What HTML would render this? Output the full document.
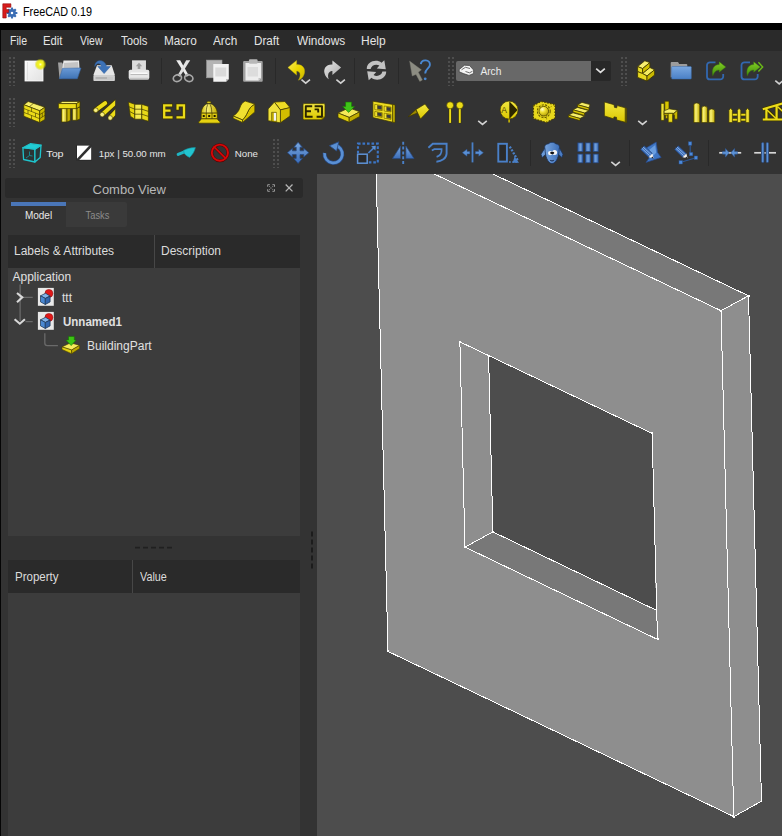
<!DOCTYPE html>
<html lang="en">
<head>
<meta charset="utf-8">
<title>FreeCAD 0.19</title>
<style>
*{box-sizing:border-box;margin:0;padding:0}
html,body{width:782px;height:836px;overflow:hidden;background:#333333}
body{position:relative;font-family:"Liberation Sans",sans-serif;font-size:12px;color:#e0e0e0}
.abs{position:absolute}
#title{left:0;top:0;width:782px;height:23px;background:#fff}
#title .t{position:absolute;left:23px;top:5px;transform:scaleX(.9);transform-origin:0 0;font-size:12px;color:#000;line-height:14px;white-space:nowrap}
#band{left:0;top:23px;width:782px;height:7px;background:#000}
#menubar{left:0;top:30px;width:782px;height:21px;background:#2a2a2a}
#menubar span{position:absolute;top:4px;transform-origin:0 0;line-height:14px;font-size:12px;color:#e4e4e4;white-space:nowrap}
#leftedge{left:0;top:30px;width:1px;height:806px;background:#050505}
.handle{position:absolute;width:6px;height:29px;
 background:linear-gradient(to bottom,#4e4e4e 2px,transparent 2px) 0 0/2px 4px repeat-y,
            linear-gradient(to bottom,#4e4e4e 2px,transparent 2px) 4px 0/2px 4px repeat-y}
.sep{position:absolute;width:1px;height:26px;background:#292929}
.ic{position:absolute;overflow:visible}
.tt{position:absolute;font-size:10.5px;line-height:12px;color:#e0e0e0;white-space:nowrap}
/* combo */
#combotitle{left:5px;top:178px;width:298px;height:20px;background:#2a2a2a;border-radius:3px}
#combotitle .t{position:absolute;left:87.5px;top:4px;font-size:13px;line-height:16px;color:#b8b8b8;white-space:nowrap}
#tabModel{left:11px;top:202px;width:55px;height:25px;background:#333333;border-top:4px solid #4a76b8}
#tabModel span,#tabTasks span{position:absolute;left:0;width:100%;text-align:center;font-size:10px;line-height:12px}
#tabModel span{top:4px;color:#e8e8e8}
#tabTasks{left:66px;top:202px;width:61px;height:25px;background:#3a3a3a;border-radius:0 2px 2px 0}
#tabTasks span{top:8px;left:1px;transform:scaleX(.93);color:#8c8c8c}
.hdr{position:absolute;background:#2a2a2a;height:33px}
.hdr span{position:absolute;top:9px;transform-origin:0 0;line-height:14px;font-size:12px;color:#dcdcdc;white-space:nowrap}
.hdr i{position:absolute;top:0;width:1px;height:33px;background:#474747}
.pane{position:absolute;background:#3c3c3c}
.tree span{position:absolute;line-height:14px;font-size:12px;color:#e0e0e0;white-space:nowrap}
#view{left:317px;top:174px;width:465px;height:662px;background:#4d4d4d}
</style>
</head>
<body>
<div id="title" class="abs"><svg id="logo" class="abs" style="left:0;top:0" width="22" height="23" viewBox="0 0 22 23">
<g fill="#3c6eb4"><circle cx="12" cy="13" r="3.9"/>
<g id="tth"><rect x="10.9" y="7.6" width="2.2" height="10.8" rx=".4"/></g>
<use href="#tth" transform="rotate(45 12 13)"/><use href="#tth" transform="rotate(90 12 13)"/><use href="#tth" transform="rotate(135 12 13)"/></g>
<rect x="10.9" y="11.9" width="2.2" height="2.2" fill="#ffffff"/>
<path d="M2.8,3.8 H10.9 V7.2 H6.2 V9.6 H8.6 V12.6 H6.2 V18 H2.8Z" fill="#d81c1c" stroke="#8e0a0a" stroke-width=".6"/>
</svg><span class="t">FreeCAD 0.19</span></div>
<div id="band" class="abs"></div>
<div id="menubar" class="abs">
<span style="left:9.5px;transform:scaleX(.88)">File</span><span style="left:43px;transform:scaleX(.94)">Edit</span><span style="left:80px;transform:scaleX(.87)">View</span><span style="left:121px;transform:scaleX(.94)">Tools</span><span style="left:163.5px;transform:scaleX(.98)">Macro</span><span style="left:213px;transform:scaleX(.98)">Arch</span><span style="left:254px;transform:scaleX(.97)">Draft</span><span style="left:296.5px;transform:scaleX(.99)">Windows</span><span style="left:361px">Help</span>
</div>
<div id="leftedge" class="abs"></div>

<!-- toolbar handles -->
<div class="handle" style="left:9px;top:57px"></div>
<div class="handle" style="left:448px;top:57px"></div>
<div class="handle" style="left:621px;top:57px"></div>
<div class="handle" style="left:9px;top:98px"></div>
<div class="handle" style="left:9px;top:139px"></div>
<div class="handle" style="left:273px;top:139px"></div>
<!-- separators -->
<div class="sep" style="left:161px;top:58px"></div>
<div class="sep" style="left:275px;top:58px"></div>
<div class="sep" style="left:354px;top:58px"></div>
<div class="sep" style="left:398px;top:58px"></div>
<div class="sep" style="left:530px;top:140px"></div>
<div class="sep" style="left:629px;top:140px"></div>
<div class="sep" style="left:708px;top:140px"></div>

<svg class="abs" style="left:0;top:51px" width="782" height="123" viewBox="0 51 782 123">
<defs>
<linearGradient id="gPage" x1="0" y1="0" x2="1" y2="1"><stop offset="0" stop-color="#fafafa"/><stop offset="1" stop-color="#e2e2e2"/></linearGradient>
<radialGradient id="gGlow"><stop offset="0" stop-color="#ffffd0"/><stop offset=".3" stop-color="#f6f620"/><stop offset=".65" stop-color="#e8e800" stop-opacity=".8"/><stop offset="1" stop-color="#d0d000" stop-opacity="0"/></radialGradient>
<linearGradient id="gBlue" x1="0" y1="0" x2="0" y2="1"><stop offset="0" stop-color="#6a9ad6"/><stop offset="1" stop-color="#3f73b5"/></linearGradient>
<linearGradient id="gGrey" x1="0" y1="0" x2="0" y2="1"><stop offset="0" stop-color="#f0f0f0"/><stop offset="1" stop-color="#c4c4c4"/></linearGradient>
<linearGradient id="gYel" x1="0" y1="0" x2="1" y2="1"><stop offset="0" stop-color="#f6ea60"/><stop offset=".5" stop-color="#ecd800"/><stop offset="1" stop-color="#c8b400"/></linearGradient>
<linearGradient id="gRedo" x1="0" y1="0" x2="1" y2="1"><stop offset="0" stop-color="#e6e6e6"/><stop offset="1" stop-color="#a8a8a8"/></linearGradient>
</defs>
<!-- new -->
<rect x="25" y="61" width="18" height="20" fill="url(#gPage)" stroke="#ffffff" stroke-width=".8"/>
<line x1="27.5" y1="62" x2="27.5" y2="80" stroke="#d4d4d4" stroke-width=".6"/>
<circle cx="40.4" cy="64.4" r="6" fill="url(#gGlow)"/>
<!-- open -->
<polygon points="58,62.5 62,62.5 63,64 63,78 59.5,78.5" fill="#a0a0a0"/>
<polygon points="63.5,60.5 79,60.5 79.5,68.5 62.5,69.5 61,77" fill="#e8e8e8"/>
<polygon points="64,63 78,62 78.5,68 63.5,68.5" fill="#c4c4c4"/>
<polygon points="62.5,68.4 81,68 77.3,78.7 59.4,78.7" fill="url(#gBlue)" stroke="#3567a8" stroke-width=".6"/>
<!-- save -->
<polygon points="97,65.3 111.7,65.3 114.9,75.1 93.4,75.1" fill="#e6e6e6"/>
<rect x="93.4" y="75.1" width="21.5" height="6" rx=".8" fill="#cfcfcf"/>
<rect x="95.5" y="77" width="17.5" height="2.2" fill="#b2b2b2"/>
<rect x="107" y="77" width="6" height="2.2" fill="#c8c8c8"/>
<path d="M94.8,66.5 C94.5,59 105,58.5 106.5,66.5 L110.4,66.5 L104.1,73.6 L97.8,66.5 L101.5,66.5 C100.5,62.5 96.5,62.5 94.8,66.5Z" fill="#3c72b8" stroke="#2d5c9c" stroke-width=".5"/>
<!-- print -->
<rect x="132.3" y="60.8" width="13.4" height="10" fill="#dcdcdc" stroke="#f2f2f2" stroke-width=".6"/>
<polygon points="139,62.8 142.2,66.2 140.3,66.2 140.3,69 137.7,69 137.7,66.2 135.8,66.2" fill="#9c9c9c"/>
<rect x="128.7" y="69.8" width="20.6" height="9.8" rx="1.8" fill="#e6e6e6"/>
<rect x="130.5" y="72.6" width="17" height="1.6" rx=".8" fill="#fafafa"/>
<rect x="130.5" y="74.2" width="17" height=".8" fill="#b0b0b0"/>
<rect x="129.2" y="77.8" width="19.6" height="1.8" rx=".9" fill="#c6c6c6"/>
<!-- cut -->
<polygon points="176.2,60.2 180.2,60.2 188.8,75.6 186.6,76.8" fill="#ececec"/>
<polygon points="190.2,60.2 186.2,60.2 177.6,75.6 179.8,76.8" fill="#e2e2e2"/>
<ellipse cx="177.4" cy="78.1" rx="4.2" ry="3.3" transform="rotate(-20 177.4 78.1)" fill="none" stroke="#a8a8a8" stroke-width="1.7"/>
<ellipse cx="188.8" cy="78.1" rx="4.2" ry="3.3" transform="rotate(20 188.8 78.1)" fill="none" stroke="#a8a8a8" stroke-width="1.7"/>
<!-- copy -->
<rect x="206.6" y="60.1" width="15.4" height="17.7" fill="#b4b4b4" stroke="#9a9a9a" stroke-width=".6"/>
<path d="M213.3,64.1 H228.8 V79 L226,81.8 H213.3Z" fill="#f2f2f2"/>
<rect x="215.3" y="67.5" width="11" height="9" fill="#dadada"/>
<polygon points="226,81.8 226,79 228.8,79" fill="#bcbcbc"/>
<!-- paste -->
<rect x="243.1" y="61" width="19.6" height="20.8" rx="1" fill="#a2a2a2"/>
<path d="M245.5,63 H261 V78 L258.5,80.5 H245.5Z" fill="#ededed"/>
<rect x="247.5" y="67" width="10.5" height="9.5" fill="#dcdcdc"/>
<polygon points="258.5,80.5 258.5,78 261,78" fill="#c2c2c2"/>
<rect x="248.9" y="59.2" width="8.7" height="4.5" rx="1.2" fill="#b8b8b8"/>
<!-- undo -->
<path d="M287.9,67.5 L296.6,60.4 L296.6,64.6 C303,64.2 305.8,69 304.2,74 C303.2,77.2 301,79.4 298.4,80.2 C300.4,77.4 300.8,73.6 299,72 C298.2,71.2 297.4,71 296.6,71 L296.6,75.1Z" fill="url(#gYel)" stroke="#c4b000" stroke-width=".4"/>
<polyline points="301.5,79.6 305.7,83.2 310,79.6" fill="none" stroke="#d2d2d2" stroke-width="1.6"/>
<!-- redo -->
<path d="M341.1,67.5 L332.4,60.4 L332.4,64.6 C326,64.2 323.2,69 324.6,73.6 C325.4,76.4 327,78.4 328.8,79.3 C327.6,76.6 327.8,73.4 329.6,72 C330.5,71.2 331.5,71 332.4,71 L332.4,75.1Z" fill="url(#gRedo)"/>
<polyline points="336.4,79.6 340.7,83.2 344.9,79.6" fill="none" stroke="#d2d2d2" stroke-width="1.6"/>
<!-- refresh -->
<g fill="#c2c2c2">
<path d="M366.8,69 C366.6,61.5 376.5,58.5 381.5,62.8 L384.3,60.3 L385.8,69.3 L376.8,68.6 L379.4,65.6 C376.5,63.6 371.5,64.8 370.6,69Z"/>
<path d="M386.2,71.6 C386.4,79.1 376.5,82.1 371.5,77.8 L368.7,80.3 L367.2,71.3 L376.2,72 L373.6,75 C376.5,77 381.5,75.8 382.4,71.6Z"/>
</g>
<!-- whats this -->
<polygon points="409.6,61.1 421.4,69.8 418.3,72.2 422.4,80 419.8,81.4 416,74.4 412.2,76" fill="#8c8c82" stroke="#7a7a70" stroke-width=".4"/>
<path d="M420.8,64.2 C421.6,58.6 430.4,59.4 429.9,65 C429.6,68.4 425.2,68.6 425.2,73.6" fill="none" stroke="#4a88d2" stroke-width="1.9"/>
<circle cx="425.2" cy="78.8" r="1.4" fill="#4a88d2"/>
<!-- workbench combo -->
<path d="M458,61 H591 V81 H458 A2,2 0 0 1 456,79 V63 A2,2 0 0 1 458,61Z" fill="#686868"/>
<path d="M591,61 H609 A2,2 0 0 1 611,63 V79 A2,2 0 0 1 609,81 H591Z" fill="#282828"/>
<polyline points="596.2,68.6 600.5,72.4 604.8,68.6" fill="none" stroke="#e0e0e0" stroke-width="1.7"/>
<text x="480.4" y="74.8" font-family="Liberation Sans, sans-serif" font-size="10" fill="#ececec" textLength="21" lengthAdjust="spacingAndGlyphs">Arch</text>
<!-- wb icon -->
<path d="M459.2,69.5 L464.5,65.2 L469.5,65.5 L473.6,70 L473.6,73.5 L469,75.4 L463.5,73.6 L459.2,71.8Z" fill="#f4f4f4" stroke="#3a3a3a" stroke-width=".7"/>
<path d="M461.5,69.8 L465.5,67.3 L470,68.5 M465.5,71.5 L469.5,72.8 L472.5,71.2" fill="none" stroke="#4a4a4a" stroke-width=".8"/>
<!-- part -->
<defs>
<linearGradient id="gY2" x1="0" y1="0" x2="1" y2="1"><stop offset="0" stop-color="#f6ee58"/><stop offset="1" stop-color="#d2c000"/></linearGradient>
<linearGradient id="gBlue2" x1="0" y1="0" x2="0" y2="1"><stop offset="0" stop-color="#7aa8e0"/><stop offset="1" stop-color="#4a80c6"/></linearGradient>
<linearGradient id="gGreen" x1="0" y1="0" x2="0" y2="1"><stop offset="0" stop-color="#84d024"/><stop offset="1" stop-color="#3f8c0c"/></linearGradient>
</defs>
<g stroke="#3c3400" stroke-width=".8" stroke-linejoin="round">
<polygon points="637.6,66.6 644.8,60.8 649.9,62.6 642.6,68.6" fill="#f8f070"/>
<polygon points="637.6,66.6 642.6,68.6 642.6,73.6 637.6,71.6" fill="#e8dc28"/>
<polygon points="642.6,68.6 649.9,62.6 649.9,67.5 642.6,73.6" fill="#cfc000"/>
<polygon points="642.6,73.6 649.9,67.5 654.6,69.8 647,76" fill="#f4ec60"/>
<polygon points="637.6,71.6 642.6,73.6 647,76 647,81 637.6,77.4" fill="#e6d820"/>
<polygon points="647,76 654.6,69.8 654.6,75.1 647,81" fill="#c8b800"/>
</g>
<!-- folder -->
<path d="M670.7,77.5 V63 A1,1 0 0 1 671.7,62 H678 L679.2,64 H686.3 A1,1 0 0 1 687.3,65 V70Z" fill="#9c9c9c"/>
<rect x="671.6" y="66.5" width="19.7" height="12.5" rx=".8" fill="url(#gBlue2)" stroke="#3a6cae" stroke-width=".5"/>
<!-- link 1 -->
<g id="lnk">
<path d="M715.5,62.3 H710 A3,3 0 0 0 707,65.3 V76.4 A3,3 0 0 0 710,79.4 H720.2 A3,3 0 0 0 723.2,76.4 V74" fill="none" stroke="#3268b0" stroke-width="1.8"/>
<path d="M725.8,67 L719.2,61.8 L719.2,64.6 C713.6,64.6 711.4,69.6 712.8,75.8 C714.4,71.8 716.2,70.2 719.2,70 L719.2,72.2Z" fill="url(#gGreen)" stroke="#3a7a08" stroke-width=".4"/>
</g>
<use href="#lnk" x="34.5"/>
<polyline points="758.4,62.3 762.7,67 758.4,71.6" fill="none" stroke="#6cbc18" stroke-width="1.4"/>
<polyline points="775.3,80.7 779.2,83.9 783,80.7" fill="none" stroke="#d2d2d2" stroke-width="1.6"/>

<defs>
<linearGradient id="yF" x1="0" y1="0" x2="0" y2="1"><stop offset="0" stop-color="#f2e640"/><stop offset="1" stop-color="#dcc800"/></linearGradient>
<linearGradient id="yH" x1="0" y1="0" x2="1" y2="0"><stop offset="0" stop-color="#c8b400"/><stop offset=".35" stop-color="#faf27a"/><stop offset="1" stop-color="#c0aa00"/></linearGradient>
<radialGradient id="ySph" cx=".35" cy=".3" r=".8"><stop offset="0" stop-color="#fffbd0"/><stop offset=".4" stop-color="#f0e030"/><stop offset="1" stop-color="#a89400"/></radialGradient>
</defs>
<g stroke="#3e3600" stroke-width=".7" stroke-linejoin="round">
<!-- wall -->
<polygon points="23.8,104.7 28.2,101.5 44.9,107.2 39.7,110.8" fill="#f6ee68"/>
<polygon points="23.8,104.7 39.7,110.8 39.7,122.6 23.8,116.2" fill="#ecdc18"/>
<polygon points="39.7,110.8 44.9,107.2 44.9,119.4 39.7,122.6" fill="#cdbc00"/>
<path d="M23.8,108.5 L39.7,114.7 L44.9,111.2 M23.8,112.4 L39.7,118.7 L44.9,115.3 M31.5,107.7 V111.5 M28,110.2 V114 M35.5,113.1 V117 M31.5,115.5 V119.3 M33.5,103.3 L29.5,106.6 M42.3,113 V117" fill="none" stroke-width=".6"/>
<!-- structure -->
<polygon points="61.5,108 67,108 67,122 61.5,122" fill="url(#yH)"/>
<polygon points="67,108 70.4,107 70.4,120.5 67,122" fill="#c4b000"/>
<polygon points="72.3,108 77,108 77,120.3 72.3,120.3" fill="url(#yH)"/>
<polygon points="77,108 80,107 80,119 77,120.3" fill="#c4b000"/>
<polygon points="58.4,103.6 62.6,101.5 80,101.5 76.4,103.6" fill="#f8f070"/>
<polygon points="58.4,103.6 76.4,103.6 76.4,108.6 58.4,108.6" fill="#ecdc18"/>
<polygon points="76.4,103.6 80,101.5 80,106.6 76.4,108.6" fill="#c8b600"/>
</g>
<!-- rebar -->
<clipPath id="cpRebar"><rect x="90" y="98" width="25.2" height="28"/></clipPath>
<g clip-path="url(#cpRebar)">
<line x1="95.6" y1="110.2" x2="105.2" y2="103.2" stroke="#3e3600" stroke-width="5.4" stroke-linecap="round"/>
<line x1="102" y1="114.7" x2="118" y2="100.3" stroke="#3e3600" stroke-width="5.4"/>
<line x1="110" y1="117.9" x2="118" y2="109.4" stroke="#3e3600" stroke-width="5.4"/>
<line x1="95.6" y1="110.2" x2="105.2" y2="103.2" stroke="#ecdc18" stroke-width="4" stroke-linecap="round"/>
<line x1="102" y1="114.7" x2="118" y2="100.3" stroke="#ecdc18" stroke-width="4"/>
<line x1="110" y1="117.9" x2="118" y2="109.4" stroke="#ecdc18" stroke-width="4"/>
</g>
<circle cx="95.8" cy="110.2" r="2.3" fill="#f8f080" stroke="#3e3600" stroke-width=".6"/>
<circle cx="102.2" cy="114.6" r="2.3" fill="#f8f080" stroke="#3e3600" stroke-width=".6"/>
<circle cx="110.2" cy="117.9" r="2.3" fill="#f8f080" stroke="#3e3600" stroke-width=".6"/>
<g stroke="#3e3600" stroke-width=".7" stroke-linejoin="round">
<!-- curtain wall -->
<polygon points="128.4,102 134.8,104.3 134.8,119.2 130.3,116.2" fill="#e4d410"/>
<polygon points="134.8,104.3 141.8,104.3 141.8,119.2 134.8,119.2" fill="#f4ea50"/>
<polygon points="141.8,104.3 148.4,106.4 148.4,121.3 141.8,119.2" fill="#e8d818"/>
<path d="M129,106.8 L134.8,109.2 H141.8 L148.4,111.4 M129.7,111.5 L134.8,114.2 H141.8 L148.4,116.4" fill="none"/>
<!-- dome -->
<path d="M201.2,118.7 H217.3 C218,120.4 219.4,121.4 220.3,122 Q220.3,123.2 219,123.2 H199.8 Q198.4,123.2 198.4,122 C199.4,121.4 200.6,120.4 201.2,118.7Z" fill="#e6d210"/>
<rect x="201.2" y="112.9" width="16.1" height="5.8" fill="#e2ce10"/>
<path d="M201.2,112.9 C201.6,107.5 204.6,104 208.9,103.2 C213.4,104 216.8,107.5 217.3,112.9Z" fill="url(#yH)"/>
<path d="M206.3,112.9 C206.2,108.5 207,105.4 208.3,103.6 M211.8,112.9 C211.8,108.5 210.9,105.4 209.6,103.6 M206.3,112.9 V118.7 M212,112.9 V118.7" fill="none" stroke-width=".7"/>
<ellipse cx="208.9" cy="102.3" rx="2.2" ry="1.05" fill="#f0de28"/>
</g>
<g fill="#241e00"><rect x="202.7" y="114.9" width="2.1" height="2.1" rx=".6"/><rect x="208.1" y="114.9" width="2.1" height="2.1" rx=".6"/><rect x="213.6" y="114.9" width="2.1" height="2.1" rx=".6"/></g>
<!-- floor plan -->
<g fill="none" stroke="#3e3600" stroke-width="3.6" stroke-linejoin="miter" stroke-linecap="square">
<path d="M171,105.4 H164.2 V117.4 H171.4 M164.2,110.6 H169.4"/>
<path d="M177.6,108.6 V105.4 H184 V117.4 H177.6"/>
</g>
<g fill="none" stroke="#ecdc18" stroke-width="2.3" stroke-linejoin="miter" stroke-linecap="square">
<path d="M171,105.4 H164.2 V117.4 H171.4 M164.2,110.6 H169.4"/>
<path d="M177.6,108.6 V105.4 H184 V117.4 H177.6"/>
</g>
<g stroke="#3e3600" stroke-width=".7" stroke-linejoin="round">
<!-- site -->
<path d="M242.5,119.9 C246.5,116 247,113 249,109.5 C250.5,107 252.5,105.4 254.8,104.1 V111.9 L242.5,122.5Z" fill="#d8c200"/>
<path d="M233.1,116 C236.5,114 238.6,111.5 239.8,108 C240.8,104.8 242.4,102.4 245.2,101.1 L254.8,104.1 C252.5,105.4 250.5,107 249,109.5 C247,113 246.5,116 242.5,119.9Z" fill="#f0e030"/>
<path d="M233.1,116 L242.5,119.9 V122.5 L233.1,118.2Z" fill="#ecdc20"/>
<!-- house -->
<polygon points="274.4,102.1 284.9,101.5 290,107.6 280.4,109.9" fill="#eedc24"/>
<polygon points="280.4,109.9 290,107.6 290,116 280.4,122.8" fill="#d2bc00"/>
<polygon points="268.1,109 274.4,102.1 280.4,109.9 280.4,122.8 268.1,120.7" fill="#f0e23c"/>
<polygon points="271.6,112.3 276.3,112.3 276.3,122 271.6,121.3" fill="#c2ae00" stroke-width=".5"/>
<rect x="273.8" y="112.9" width="2.3" height="7.8" fill="#f4f4f4" stroke="none"/>
<!-- reference -->
<path d="M304.2,103.6 H323.8 A1.2,1.2 0 0 1 325,104.8 V117 L322,119.8 H304.2 A1.2,1.2 0 0 1 303,118.6 V104.8 A1.2,1.2 0 0 1 304.2,103.6Z" fill="url(#yF)"/>
<path d="M312.2,106.2 H305.8 V116.8 H312.6 M305.8,111.2 H311 M314.6,106.2 H322 V116.8 H316.6 M314.6,109.4 H318.2 V112.4" fill="none" stroke="#2a2400" stroke-width="1.9"/><polygon points="322,119.8 322,117 325,117" fill="#a89600" stroke-width=".5"/>
<!-- building part -->
<polygon points="338,113 349,107.8 359.7,111.8 349.2,117.4" fill="#f4ea58"/>
<polygon points="338,113 349.2,117.4 349.2,122.3 338,117.6" fill="#e0d010"/>
<polygon points="349.2,117.4 359.7,111.8 359.7,116.4 349.2,122.3" fill="#bfac00"/>
<polygon points="345.6,102.1 351.6,102.1 351.6,106.6 354.6,106.6 348.6,112.4 342.6,106.6 345.6,106.6" fill="#3fc418" stroke="#187800" stroke-width=".6"/>
<!-- window -->
<polygon points="372.9,101.2 392.8,104.5 392.8,122.2 372.9,117.6" fill="#ecdc20"/>
<polygon points="392.8,104.5 395,104.9 395,122.5 392.8,122.2" fill="#d8c400"/>
<g stroke="#6a5e00" stroke-width=".6" fill="#b4a200"><polygon points="374.8,104.4 382.2,105.6 382.2,110.6 374.8,109.6"/><polygon points="384.2,106 391,107.1 391,112 384.2,111"/><polygon points="374.8,111.6 382.2,112.7 382.2,117.4 374.8,116.2"/><polygon points="384.2,113.2 391,114.3 391,119.4 384.2,118.2"/></g>
<g stroke="none" fill="#f0e030"><polygon points="375.2,104.8 377,105.1 377,109.6 375.2,109.3"/><polygon points="384.6,106.4 386.3,106.7 386.3,111 384.6,110.7"/><polygon points="375.2,112 377,112.3 377,116.2 375.2,115.9"/><polygon points="384.6,113.6 386.3,113.9 386.3,118.2 384.6,117.9"/></g>
<g stroke="none" fill="#3a3a3e"><polygon points="377.4,105.5 381.6,106.2 381.6,109.4 377.4,108.8"/><polygon points="386.6,107.1 390.6,107.8 390.6,111 386.6,110.4"/><polygon points="377.4,112.6 381.6,113.3 381.6,116.2 377.4,115.6"/><polygon points="386.6,114.6 390.6,115.2 390.6,118.2 386.6,117.6"/></g>
<!-- roof -->
<polygon points="408,116.8 416,109.5 417.4,113" fill="#9c8a00"/>
<polygon points="416,109.5 425,104 429.3,109.8 420.5,119" fill="url(#yF)"/>
</g>
<!-- axes -->
<g><line x1="450.1" y1="106" x2="450.1" y2="123.2" stroke="#3e3600" stroke-width="3"/><line x1="459.8" y1="106" x2="459.8" y2="123.2" stroke="#3e3600" stroke-width="3"/>
<line x1="450.1" y1="106" x2="450.1" y2="122.9" stroke="#ecdc18" stroke-width="1.9"/><line x1="459.8" y1="106" x2="459.8" y2="122.9" stroke="#ecdc18" stroke-width="1.9"/>
<circle cx="450.1" cy="105.3" r="3.5" fill="#ecdc18" stroke="#3e3600" stroke-width=".6"/><circle cx="459.8" cy="105.3" r="3.5" fill="#ecdc18" stroke="#3e3600" stroke-width=".6"/></g>
<polyline points="478.2,120.8 482.5,124.4 486.8,120.8" fill="none" stroke="#d2d2d2" stroke-width="1.6"/>
<!-- section plane -->
<line x1="509.1" y1="118" x2="509.1" y2="122.6" stroke="#d8c400" stroke-width="1.5"/>
<circle cx="509.1" cy="110.1" r="9" fill="url(#yF)" stroke="#3e3600" stroke-width=".7"/>
<polygon points="509.3,101.3 517.6,110.1 509.3,118.9" fill="#2c2600"/>
<text x="501.2" y="113.2" font-family="Liberation Sans, sans-serif" font-size="8.5" fill="#4a4000">A</text>
<!-- space -->
<polygon points="533.4,105.6 541.2,101.4 555,104.6 555,118 546.6,122.6 533.4,118.6" fill="#e8d81c" stroke="#4a4000" stroke-width="1.3" stroke-dasharray="1.5 1.5"/>
<path d="M533.4,105.6 L546.6,109 L555,104.6 M546.6,109 V122.6" fill="none" stroke="#8a7a00" stroke-width=".7" stroke-dasharray="1.5 1.5"/>
<circle cx="543.8" cy="111.2" r="6.4" fill="none" stroke="#6a5c00" stroke-width="1.1" stroke-dasharray="2.2 1.2"/><circle cx="543.8" cy="111.2" r="4.8" fill="url(#ySph)" stroke="#4a4000" stroke-width=".8"/>
<g stroke="#3e3600" stroke-width=".7" stroke-linejoin="round">
<!-- stairs -->
<polygon points="568.4,115.2 573,112.8 584.5,116 580,118.5" fill="#f6ee68"/><polygon points="568.4,115.2 580,118.5 580,120.6 568.4,117.3" fill="#d8c600"/>
<polygon points="573,109.8 577.5,107.4 589,110.6 584.5,113" fill="#f6ee68"/><polygon points="573,109.8 584.5,113 584.5,115.4 573,112.2" fill="#d8c600"/>
<polygon points="577.5,104.7 582,102.4 590,104.6 589,107.9" fill="#f6ee68"/><polygon points="577.5,104.7 589,107.9 589,110.2 577.5,107" fill="#d8c600"/>
<!-- panel -->
<polygon points="625.2,107.8 626.6,108.6 626.6,122.4 625.2,122.2" fill="#a89400"/>
<polygon points="604.4,102 614,104.7 614.5,107.4 616.7,107.8 617.2,105.6 625.2,107.8 625.2,122.2 616.7,120 616.5,117.3 614,116.9 613.6,118.8 604.4,115.9" fill="url(#yF)"/>
<!-- chair -->
<rect x="664.8" y="101.2" width="4.2" height="10.4" fill="#d8c600"/>
<rect x="661" y="103.4" width="3.1" height="17" fill="#f0e438"/>
<rect x="665.4" y="113" width="2.4" height="5.6" fill="#c2ae00"/>
<polygon points="664.1,110.8 669,108.8 677.6,110.2 673.8,113.4 664.1,113.4" fill="#f6ee68"/>
<rect x="664.1" y="113.4" width="9.7" height="1.8" fill="#d2c000"/>
<rect x="668.2" y="113.4" width="4.4" height="8.9" fill="#e8d818"/>
<polygon points="673.8,113.4 677.6,110.2 677.6,119.2 674.4,119.2 674.4,115.2 673.8,115.2" fill="#c8b600"/>
<!-- pipes -->
<path d="M693.7,105.2 A3.05,2.3 0 0 1 699.8,105.2 V122.6 H693.7Z" fill="url(#yH)"/>
<path d="M701.6,108.4 A2.9,2.3 0 0 1 707.4,108.4 V122.6 H701.6Z" fill="url(#yH)"/>
<path d="M708.7,111.2 A3.05,2.3 0 0 1 714.8,111.2 V122.6 H708.7Z" fill="url(#yH)"/>
<!-- fence -->
<rect x="731" y="113.4" width="16" height="2.6" fill="#ecdc18"/><rect x="731" y="118.4" width="16" height="2.6" fill="#ecdc18"/>
<polygon points="728.9,110.4 730.65,108 732.4,110.4 732.4,122.6 728.9,122.6" fill="#f0e030"/>
<polygon points="737.4,110.4 739.1,108 740.8,110.4 740.8,122.6 737.4,122.6" fill="#f0e030"/>
<polygon points="745.8,110.4 747.55,108 749.3,110.4 749.3,122.6 745.8,122.6" fill="#f0e030"/>
</g>
<!-- truss -->
<g fill="none" stroke="#3e3600" stroke-width="3.4"><path d="M762.8,119.5 H784 M762.8,109.2 L784,103 M766.4,109 V119 M776.6,106 V119 M767,110 L776,118.6 M777.4,106.4 L784,112.6"/></g>
<g fill="none" stroke="#ecdc18" stroke-width="2.2"><path d="M762.8,119.5 H784 M762.8,109.2 L784,103 M766.4,109 V119 M776.6,106 V119" /><path d="M767,110 L776,118.6 M777.4,106.4 L784,112.6" stroke-width="1.4"/></g>
<polyline points="638.2,120.8 642.5,124.4 646.8,120.8" fill="none" stroke="#d2d2d2" stroke-width="1.6"/>

<defs>
<linearGradient id="bV" x1="0" y1="0" x2="0" y2="1"><stop offset="0" stop-color="#7aa8e0"/><stop offset="1" stop-color="#3a6cb8"/></linearGradient>
<linearGradient id="bH" x1="0" y1="0" x2="1" y2="0"><stop offset="0" stop-color="#3466b4"/><stop offset=".5" stop-color="#74a2dc"/><stop offset="1" stop-color="#3466b4"/></linearGradient>
<linearGradient id="bH2" x1="0" y1="0" x2="1" y2="0"><stop offset="0" stop-color="#78a6e0"/><stop offset="1" stop-color="#3c6eb8"/></linearGradient>
</defs>
<!-- view cube -->
<g stroke="#1fc4cc" stroke-width="1.3" stroke-linejoin="round">
<polygon points="22.9,147.7 34.9,149.2 34.9,162 23.6,159.5" fill="#2b3434"/>
<polygon points="34.9,149.2 41,145.2 40.2,157.4 34.9,162" fill="#28383a"/>
<polygon points="22.9,147.7 30.3,143.7 41,145.2 34.9,149.2" fill="#22ccd4"/>
</g>
<path d="M29.5,151.5 V155.5 L26,158 M29.5,155.5 L32.5,156" fill="none" stroke="#189098" stroke-width=".9"/>
<text x="46.3" y="156.9" font-family="Liberation Sans, sans-serif" font-size="9.5" fill="#e6e6e6" textLength="17.3" lengthAdjust="spacingAndGlyphs">Top</text>
<!-- line style -->
<rect x="76.3" y="144.9" width="15.6" height="15.6" fill="#262626"/>
<rect x="77" y="145.6" width="14.2" height="14.2" fill="#ffffff"/>
<clipPath id="cpLS"><rect x="76.3" y="144.9" width="15.6" height="15.6"/></clipPath>
<line x1="76.5" y1="161" x2="92" y2="144.6" stroke="#303030" stroke-width="2.6" clip-path="url(#cpLS)"/>
<text x="98.8" y="156.9" font-family="Liberation Sans, sans-serif" font-size="9.5" fill="#e6e6e6" textLength="66.8" lengthAdjust="spacingAndGlyphs">1px | 50.00 mm</text>
<!-- trowel -->
<line x1="178.2" y1="154.4" x2="185" y2="151.6" stroke="#1fb6c4" stroke-width="3.1" stroke-linecap="round"/>
<path d="M183.6,150.4 C187,148.6 191.5,147.4 195.4,147.6 C194.6,151.4 192.4,155 189.6,157.4 C187.6,156.6 185.2,154.8 184.2,153.2Z" fill="#22c4d0" stroke="#12909c" stroke-width=".6"/>
<!-- none -->
<circle cx="219.9" cy="152.7" r="8.1" fill="none" stroke="#5a0000" stroke-width="2.9"/>
<line x1="214.2" y1="147" x2="225.6" y2="158.4" stroke="#5a0000" stroke-width="2.6"/>
<circle cx="219.9" cy="152.7" r="8.1" fill="none" stroke="#d40808" stroke-width="1.9"/>
<line x1="214.2" y1="147" x2="225.6" y2="158.4" stroke="#d40808" stroke-width="1.7"/>
<text x="234.8" y="156.9" font-family="Liberation Sans, sans-serif" font-size="9.5" fill="#e6e6e6" textLength="23.2" lengthAdjust="spacingAndGlyphs">None</text>
<!-- move -->
<path d="M298.1,142.3 L302.4,147.2 H300 V150.8 H303.8 V148.4 L308.8,152.7 L303.8,157 V154.6 H300 V158.4 H302.4 L298.1,163.4 L293.8,158.4 H296.2 V154.6 H292.4 V157 L287.4,152.7 L292.4,148.4 V150.8 H296.2 V147.2 H293.8Z" fill="url(#bV)" stroke="#274a84" stroke-width=".8"/>
<!-- rotate -->
<path d="M324.6,153 A8.9,8.9 0 1 0 334.8,145.2" fill="none" stroke="#274a84" stroke-width="4"/>
<path d="M324.6,153 A8.9,8.9 0 1 0 334.8,145.2" fill="none" stroke="#5a90d4" stroke-width="2.7"/>
<polygon points="338.8,141.8 329.4,145.7 336.6,151" fill="#5a90d4" stroke="#274a84" stroke-width=".8"/>
<!-- scale -->
<rect x="358" y="143.6" width="19.8" height="18.8" fill="none" stroke="#3c76c6" stroke-width="2.1" stroke-dasharray="2.6 1.9"/>
<rect x="357.6" y="154.2" width="9.6" height="9" fill="#2a2a2a" stroke="#5e92d6" stroke-width="1.5"/>
<line x1="368.4" y1="153" x2="374" y2="147.6" stroke="#4a80c8" stroke-width="1.7"/>
<polygon points="375.8,145.8 375.4,150.4 371.2,146.2" fill="#5a90d4"/>
<!-- mirror -->
<polygon points="392.5,158.6 400.5,146 400.5,158.6" fill="url(#bV)" stroke="#274a84" stroke-width=".7"/>
<polygon points="405.9,146 414,158.6 405.9,158.6" fill="url(#bV)" stroke="#274a84" stroke-width=".7"/>
<line x1="403.2" y1="141.8" x2="403.2" y2="164.6" stroke="#4a80c8" stroke-width="1.9" stroke-dasharray="3 1.8"/>
<!-- offset -->
<path d="M428.4,147.8 L432.8,143.8 H446.6 V153.6 C446.6,158.4 441.5,161.4 436.4,161.8" fill="none" stroke="#4a80c8" stroke-width="1.9"/>
<path d="M431.8,150.6 L434.4,149.2 H441.6 C441.8,153.4 440,155.8 436.6,156.9" fill="none" stroke="#4a80c8" stroke-width="1.7"/>
<!-- trimex -->
<line x1="472.5" y1="142.4" x2="472.5" y2="162.4" stroke="#4a80c8" stroke-width="1.8"/>
<polygon points="462.4,152.7 467,149.2 467,151.5 469.8,151.5 469.8,153.9 467,153.9 467,156.2Z" fill="#5a90d4" stroke="#2e5898" stroke-width=".5"/>
<polygon points="483.4,152.7 478.8,149.2 478.8,151.5 475.4,151.5 475.4,153.9 478.8,153.9 478.8,156.2Z" fill="#5a90d4" stroke="#2e5898" stroke-width=".5"/>
<!-- stretch -->
<rect x="498.3" y="143.8" width="8.6" height="17.8" fill="#2a2a2a" stroke="#4a80c8" stroke-width="1.9"/>
<line x1="509.8" y1="146.6" x2="517.8" y2="160.4" stroke="#4a80c8" stroke-width="2.3" stroke-dasharray="2 1.4"/>
<line x1="509" y1="162" x2="518.5" y2="162" stroke="#4a80c8" stroke-width="1.6" stroke-dasharray="1.8 1.4"/>
<polygon points="514.6,156.6 519,162.8 512.6,162.8" fill="#4a80c8"/>
<!-- clone (sheep) -->
<path d="M545.6,147 L541,154.2 L542.2,157.6 L546.2,153.8Z" fill="#6a9ad8" stroke="#1c345c" stroke-width=".8" stroke-linejoin="round"/>
<path d="M558.8,147 L563,154.2 L561.8,157.6 L558,153.8Z" fill="#4a7cc4" stroke="#1c345c" stroke-width=".8" stroke-linejoin="round"/>
<path d="M545,148.8 C544,146.4 545.4,143.8 548.4,144 C549.6,141.8 554.6,141.8 555.8,144 C558.8,143.8 560.2,146.4 559.2,148.8 C559.2,152 558.6,156 557.4,158.6 C556.2,161.4 554.4,163.5 552,163.6 C549.8,163.5 548,161.4 546.8,158.6 C545.6,156 545.1,152 545,148.8Z" fill="url(#bH2)" stroke="#1c345c" stroke-width=".8"/>
<circle cx="550.2" cy="153.1" r="2.2" fill="#f6f6f6"/><circle cx="554.6" cy="152.5" r="2.5" fill="#f6f6f6"/>
<ellipse cx="552.2" cy="153" rx="2.1" ry="1.15" fill="#101010"/>
<path d="M550.2,160.3 Q552,161.7 553.8,160.3" fill="none" stroke="#1c2c4c" stroke-width="1"/>
<!-- array -->
<g fill="url(#bH)" stroke="#244680" stroke-width=".7">
<rect x="577.8" y="142.9" width="5.1" height="8.6"/><rect x="585.5" y="142.9" width="5.1" height="8.6"/><rect x="593.2" y="142.9" width="5.1" height="8.6"/>
<rect x="577.8" y="154.1" width="5.1" height="8.7"/><rect x="585.5" y="154.1" width="5.1" height="8.7"/><rect x="593.2" y="154.1" width="5.1" height="8.7"/>
</g>
<polyline points="611.3,161.8 615.6,165.4 619.9,161.8" fill="none" stroke="#d2d2d2" stroke-width="1.6"/>
<!-- edit -->
<polygon points="656.2,142 657.6,152.5 661.2,157.4 646,162.4 650.8,155.4 645.2,148.6" fill="#3f76c4" stroke="#26498a" stroke-width=".7"/>
<polygon points="655.2,145 656.2,152.8 653,156 649,150" fill="#6a9ee0"/>
<g id="pencil">
<polygon points="640.6,149.4 644.2,145.8 652.4,153.4 648.6,157.2" fill="#3a6cb8" stroke="#1e3c70" stroke-width=".6"/>
<path d="M641.8,148.2 L649.8,155.8 M643,147 L651.2,154.6" fill="none" stroke="#9cc0ee" stroke-width=".8"/>
<polygon points="652.4,153.4 648.6,157.2 653.6,158.2" fill="#f4f4f4"/>
<polygon points="652.2,156.4 653.8,158.4 651.4,157.9" fill="#1a1a1a"/>
</g>
<!-- subelement -->
<use href="#pencil" x="34"/>
<path d="M690.2,143.5 V154 M695.8,157.7 L681,162.2" fill="none" stroke="#2e5898" stroke-width="1.1"/>
<g fill="#4c8ada" stroke="#2a5290" stroke-width=".5"><rect x="688.4" y="141.8" width="3.4" height="3.4"/><rect x="689.4" y="152.4" width="3.4" height="3.4"/><rect x="694.2" y="156" width="3.4" height="3.4"/><rect x="679" y="160.6" width="3.4" height="3.4"/></g>
<!-- join -->
<line x1="719.2" y1="152.8" x2="741.2" y2="152.8" stroke="#d6d6d6" stroke-width="1.7"/>
<polygon points="722.6,151.4 725.4,151.4 725.4,148.4 729.2,152.8 725.4,157.2 725.4,154.2 722.6,154.2" fill="#5a90d4" stroke="#2a5290" stroke-width=".5"/>
<polygon points="737.4,151.4 734.6,151.4 734.6,148.4 730.8,152.8 734.6,157.2 734.6,154.2 737.4,154.2" fill="#5a90d4" stroke="#2a5290" stroke-width=".5"/>
<!-- split -->
<line x1="754.2" y1="152.8" x2="761" y2="152.8" stroke="#d6d6d6" stroke-width="1.7"/>
<line x1="764.4" y1="152.8" x2="765.8" y2="152.8" stroke="#d6d6d6" stroke-width="1.7"/>
<line x1="769" y1="152.8" x2="776" y2="152.8" stroke="#d6d6d6" stroke-width="1.7"/>
<rect x="761.6" y="142.6" width="2.3" height="20" rx="1" fill="#5a90d4" stroke="#264a88" stroke-width=".6"/>
<rect x="766.2" y="142.6" width="2.3" height="20" rx="1" fill="#5a90d4" stroke="#264a88" stroke-width=".6"/>

</svg>

<!-- combo view -->
<div id="combotitle" class="abs"><span class="t">Combo View</span></div>
<div id="tabModel" class="abs"><span>Model</span></div>
<div id="tabTasks" class="abs"><span>Tasks</span></div>
<div class="hdr" style="left:8px;top:235px;width:292px"><span style="left:6px">Labels &amp; Attributes</span><i style="left:146px"></i><span style="left:153px">Description</span></div>
<div class="pane tree" style="left:8px;top:268px;width:292px;height:268px">
<span style="left:4.5px;top:2px">Application</span>
<span style="left:54px;top:23px">ttt</span>
<span style="left:54.5px;top:47px;font-weight:bold;transform:scaleX(.96);transform-origin:0 0">Unnamed1</span>
<span style="left:79px;top:71px">BuildingPart</span>
</div>
<div class="hdr" style="left:8px;top:560px;width:292px"><span style="left:6.5px;top:10px;transform:scaleX(.96)">Property</span><i style="left:124px"></i><span style="left:132px;top:10px;transform:scaleX(.9)">Value</span></div>
<div class="pane" style="left:8px;top:593px;width:292px;height:243px"></div>

<svg class="abs" style="left:0;top:174px" width="317" height="662" viewBox="0 174 317 662">
<defs>
<g id="docicon">
<rect x="37.9" y="287.9" width="15.9" height="17.9" fill="#e9e9e9"/>
<circle cx="48.9" cy="293.4" r="4" fill="#e01818" stroke="#8c0808" stroke-width=".5"/>
<g stroke="#18304e" stroke-width=".7" stroke-linejoin="round">
<polygon points="40.5,295.8 45.6,293.3 50.1,296.1 45.3,298.4" fill="#82b4ea"/>
<polygon points="40.5,295.8 45.3,298.4 45.3,304.5 40.5,301.9" fill="#4a88d2"/>
<polygon points="45.3,298.4 50.1,296.1 50.1,301.9 45.3,304.5" fill="#3266ae"/>
</g>
</g>
</defs>
<!-- branch lines -->
<path d="M20.1,284.5 V321 M25.5,321.6 H32.7 M22,297.3 H32.7" fill="none" stroke="#6a6a6a" stroke-width="1.3"/>
<path d="M44.8,333.3 V343 Q44.8,345.6 47.4,345.6 H57.9" fill="none" stroke="#6a6a6a" stroke-width="1.3"/>
<polyline points="17,293 22.3,297.4 17,302.2" fill="none" stroke="#d8d8d8" stroke-width="2.1" stroke-linejoin="miter"/>
<polyline points="14.6,319.2 19.8,323.7 24.9,319.2" fill="none" stroke="#d8d8d8" stroke-width="2.1" stroke-linejoin="miter"/>
<use href="#docicon"/>
<use href="#docicon" y="24"/>
<!-- building part icon -->
<g stroke="#4a4000" stroke-width=".6" stroke-linejoin="round">
<polygon points="62,346.9 70.6,342.8 79.6,345.4 71.6,350" fill="#f6ec5c"/>
<polygon points="62,346.9 71.6,350 71.6,353.7 62,349.4" fill="#e0d010"/>
<polygon points="71.6,350 79.6,345.4 79.6,348.5 71.6,353.7" fill="#bca800"/>
</g>
<polygon points="68.5,336.4 74.3,336.4 74.3,340 76.2,340 71.2,345.6 65.8,340 68.5,340" fill="#3cc414" stroke="#167400" stroke-width=".6"/>

<!-- float / close buttons -->
<g fill="none" stroke="#9a9a9a" stroke-width="1">
<path d="M267.7,186.8 V184.7 H269.8 M272.4,184.7 H274.5 V186.8 M274.5,189.2 V191.3 H272.4 M269.8,191.3 H267.7 V189.2"/>
<path d="M269.2,186.2 L270.4,187.4 M273,186.2 L271.8,187.4 M269.2,189.8 L270.4,188.6 M273,189.8 L271.8,188.6" stroke-width=".9"/>
</g>
<path d="M285.7,184.5 L292.5,191.4 M292.5,184.5 L285.7,191.4" fill="none" stroke="#b4b4b4" stroke-width="1.3"/>
<!-- horizontal splitter dashes -->
<line x1="135" y1="547.6" x2="173" y2="547.6" stroke="#202020" stroke-width="1.8" stroke-dasharray="5 3"/>
<!-- vertical splitter dashes -->
<line x1="312" y1="531.4" x2="312" y2="569" stroke="#1c1c1c" stroke-width="1.9" stroke-dasharray="5 3"/>

</svg>
<!-- 3D view -->
<div id="view" class="abs">
<svg width="465" height="662" viewBox="317 174 465 662" style="display:block" shape-rendering="crispEdges">
<polygon points="375.5,146 403,131.1 748.5,295.8 721,310.7" fill="#787878"/>
<polygon points="721,310.7 748.5,295.8 761.5,801.2 733.8,816.6" fill="#8e8e8e"/>
<polygon points="375.5,146 721,310.7 733.8,816.6 388,651.4" fill="#8e8e8e"/>
<polygon points="488.6,355.6 652.1,433.4 656,610.1 492.9,531.9" fill="#4d4d4d"/>
<polygon points="465,547.1 492.9,531.9 656,610.1 657.5,639.4" fill="#787878"/>
<g fill="none" stroke="#ffffff" stroke-width="1">
<polygon points="375.5,146 721,310.7 733.8,816.6 388,651.4"/>
<polyline points="403,131.1 748.5,295.8 761.5,801.2 733.8,816.6"/>
<line x1="721" y1="310.7" x2="748.5" y2="295.8"/>
<polygon points="459.9,341.9 652.1,433.4 657.5,639.4 465,547.1"/>
<polyline points="488.6,355.6 492.9,531.9 656,610.1"/>
<line x1="465" y1="547.1" x2="492.9" y2="531.9"/>
</g>
<g id="vtx" fill="#ffffff"><rect x="720.0" y="309.7" width="2" height="2"/><rect x="747.5" y="294.8" width="2" height="2"/><rect x="732.8" y="815.6" width="2" height="2"/><rect x="387.0" y="650.4" width="2" height="2"/><rect x="458.9" y="340.9" width="2" height="2"/><rect x="651.1" y="432.4" width="2" height="2"/><rect x="656.5" y="638.4" width="2" height="2"/><rect x="464.0" y="546.1" width="2" height="2"/><rect x="491.9" y="530.9" width="2" height="2"/></g>
</svg>
</div>
</body>
</html>
